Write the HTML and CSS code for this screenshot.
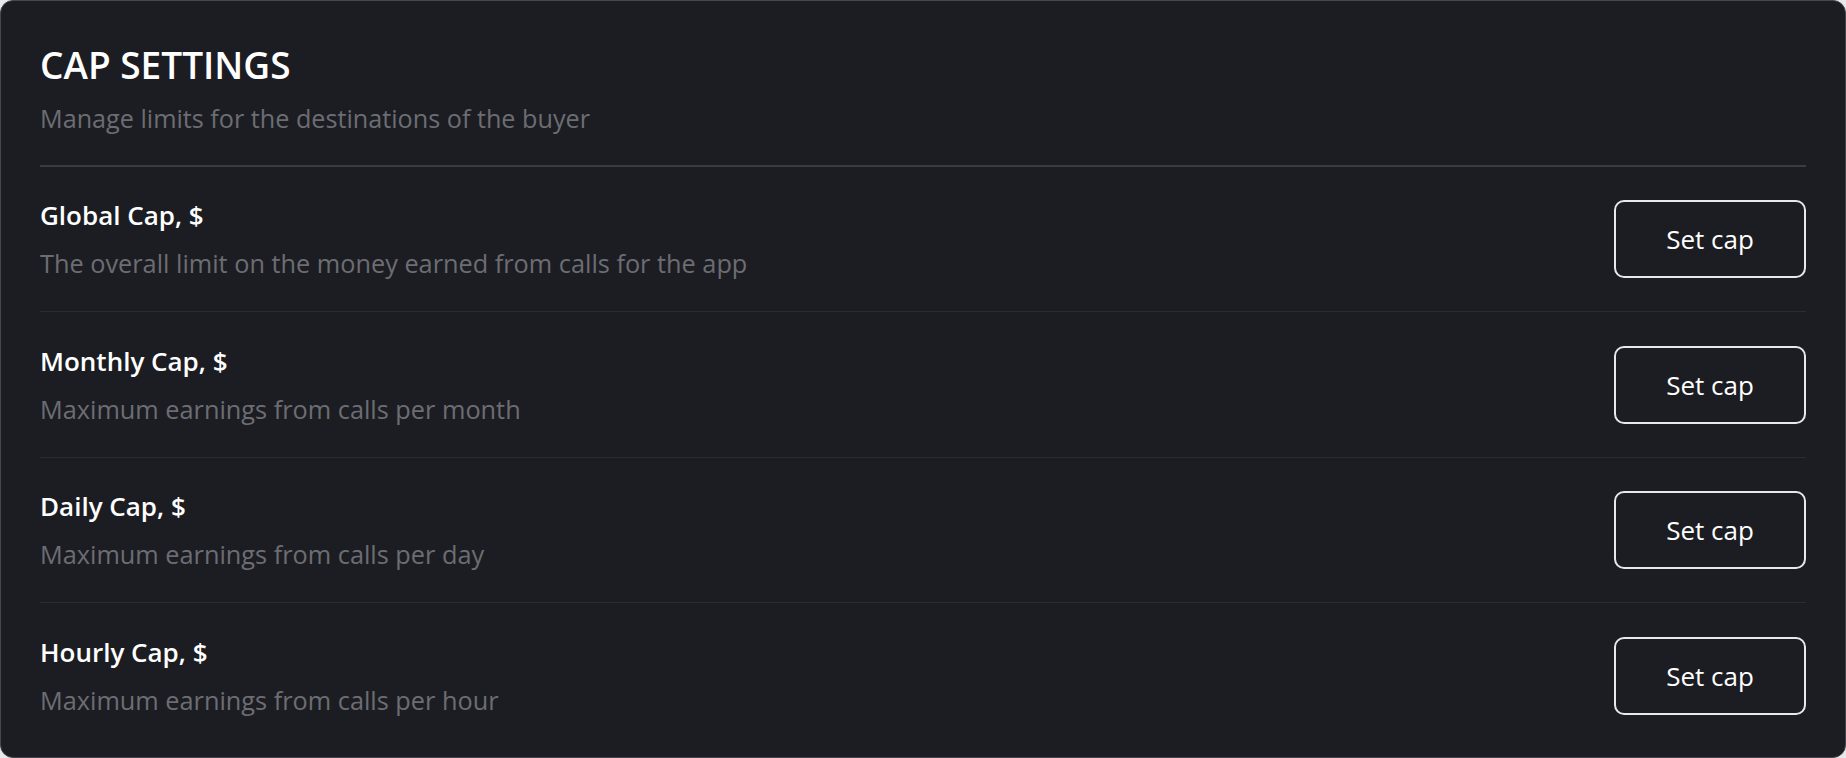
FILE: index.html
```html
<!DOCTYPE html>
<html lang="en">
<head>
<meta charset="utf-8">
<title>Cap settings</title>
<link rel="stylesheet" href="styles.css">
</head>
<body>
<section class="card">
  <header class="card-head">
    <h1 class="card-title">CAP SETTINGS</h1>
    <p class="card-sub">Manage limits for the destinations of the buyer</p>
  </header>
  <div class="rows">
    <div class="row">
      <div class="row-text">
        <div class="row-title">Global Cap, $</div>
        <div class="row-desc">The overall limit on the money earned from calls for the app</div>
      </div>
      <button class="btn" type="button">Set cap</button>
    </div>
    <div class="row">
      <div class="row-text">
        <div class="row-title">Monthly Cap, $</div>
        <div class="row-desc">Maximum earnings from calls per month</div>
      </div>
      <button class="btn" type="button">Set cap</button>
    </div>
    <div class="row">
      <div class="row-text">
        <div class="row-title">Daily Cap, $</div>
        <div class="row-desc">Maximum earnings from calls per day</div>
      </div>
      <button class="btn" type="button">Set cap</button>
    </div>
    <div class="row">
      <div class="row-text">
        <div class="row-title">Hourly Cap, $</div>
        <div class="row-desc">Maximum earnings from calls per hour</div>
      </div>
      <button class="btn" type="button">Set cap</button>
    </div>
  </div>
</section>
</body>
</html>
```

FILE: styles.css
```css
* { box-sizing: border-box; }
html, body { margin: 0; padding: 0; }
body {
  background: #e9e9ec;
  font-family: "Open Sans", "Noto Sans", sans-serif;
  width: 1846px;
  height: 758px;
}
.card {
  width: 1846px;
  height: 758px;
  background: #1c1d22;
  border: 1.5px solid #46474e;
  border-radius: 13px;
  padding: 0 39px 0 39px;
  display: flex;
  flex-direction: column;
}
.card-head {
  padding-top: 39px;
  border-bottom: 2px solid #3a3b43;
  padding-bottom: 30px;
}
.card-title {
  margin: 0;
  font-size: 37px;
  line-height: 50px;
  font-weight: 600;
  color: #ffffff;
}
.card-sub {
  margin: 11px 0 0 0;
  font-size: 25.2px;
  line-height: 34px;
  color: #6c6d73;
}
.row {
  display: flex;
  align-items: center;
  justify-content: space-between;
  padding: 30.3px 0 30.2px;
  border-bottom: 1px solid #2b2c32;
}
.row:last-child { border-bottom: none; }
.row-text {
  display: flex;
  flex-direction: column;
  gap: 12px;
}
.row-title {
  font-size: 26px;
  line-height: 36px;
  font-weight: 600;
  color: #ffffff;
}
.row-desc {
  font-size: 25.3px;
  line-height: 36px;
  color: #6c6d73;
}
.btn {
  width: 192px;
  height: 78px;
  background: transparent;
  border: 2px solid #e8e8ea;
  border-radius: 10px;
  color: #ffffff;
  font-family: inherit;
  font-size: 26px;
  cursor: pointer;
}
```
